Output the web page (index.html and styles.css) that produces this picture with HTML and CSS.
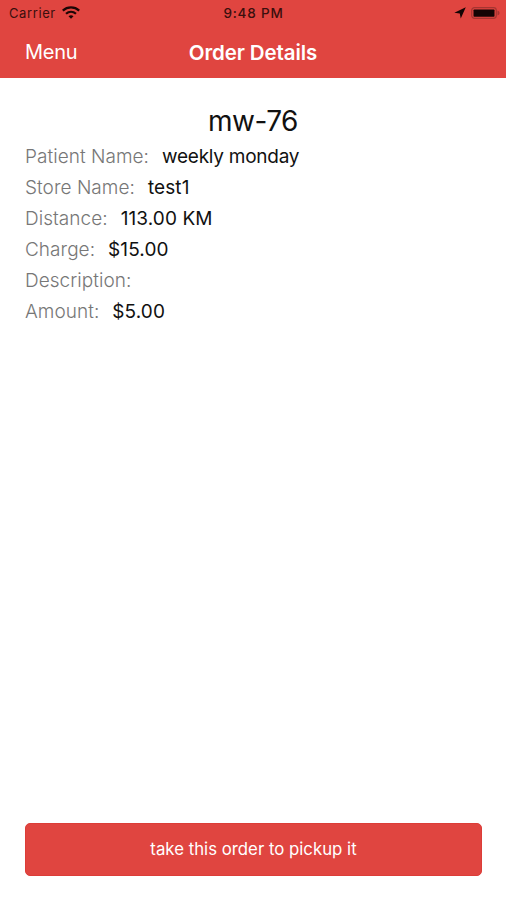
FILE: index.html
```html
<!DOCTYPE html>
<html lang="en">
<head>
  <meta charset="UTF-8" />
  <meta name="viewport" content="width=device-width, initial-scale=1" />
  <title>Order Details</title>
  <link rel="stylesheet" href="styles.css">
</head>
<body>
  <header class="header">
    <div class="status-bar">
      <div class="status-left">
        <span class="carrier">Carrier</span>
        <svg class="wifi" viewBox="0 0 18 13" width="18" height="13" fill="none" stroke="#1c0605">
          <path d="M.8 4.600C5.500 .4 12.500 .4 17.200 4.600" stroke-width="2.300" />
          <path d="M4 7.800C6.900 5.200 11.100 5.200 14 7.800" stroke-width="2.200" />
          <path d="M6.500 10.300Q9 8.200 11.500 10.300L9 12.800Z" fill="#1c0605" stroke="none" />
        </svg>
      </div>
      <span class="time">9:48 PM</span>
      <div class="status-right">
        <svg width="12" height="12" viewBox="0 0 11 11">
          <path d="M10.800 .3L6.200 10.500L5.300 6L.3 5.200Z" fill="#140404" />
        </svg>
        <svg width="29" height="12" viewBox="0 0 29 12">
          <rect x=".7" y=".7" width="24.600" height="10.600" rx="2.800" fill="none" stroke="#a53531" stroke-width="1.200" />
          <rect x="2.500" y="2.400" width="21" height="7.400" rx=".8" fill="#140404" />
          <path d="M26.500 3.600Q28.600 4.300 28.600 6T26.500 8.400Z" fill="#a53531" />
        </svg>
      </div>
    </div>
    <nav class="nav">
      <a class="menu">Menu</a>
      <h1>Order Details</h1>
    </nav>
  </header>

  <main class="content">
    <h2>mw-76</h2>
    <div class="row"><span class="label">Patient Name:</span><span class="value name">weekly monday</span></div>
    <div class="row"><span class="label">Store Name:</span><span class="value">test1</span></div>
    <div class="row"><span class="label">Distance:</span><span class="value">113.00 KM</span></div>
    <div class="row"><span class="label">Charge:</span><span class="value">$15.00</span></div>
    <div class="row"><span class="label">Description:</span></div>
    <div class="row"><span class="label">Amount:</span><span class="value">$5.00</span></div>
  </main>

  <button class="pickup">take this order to pickup it</button>
</body>
</html>
```
FILE: styles.css
```css
* {
  box-sizing: border-box;
}

body {
  margin: 0;
  height: 100vh;
  display: flex;
  flex-direction: column;
  background: #fff;
  color: #111;
  font-family: Inter, "Liberation Sans", sans-serif;
}

.header {
  height: 78px;
  background: #e04540;
}

.status-bar {
  display: grid;
  grid-template-columns: 1fr auto 1fr;
  align-items: center;
  height: 26px;
  padding: 0 6px 0 9px;
  color: #3a0f0d;
  font-size: 13px;
}

.status-left,
.status-right {
  display: flex;
  align-items: center;
}

.status-left {
  gap: 6px;
}

.carrier {
  letter-spacing: 0.6px;
}

.wifi {
  margin-bottom: 1px;
}

.time {
  margin-right: 2px;
  font-size: 13.5px;
  font-weight: 500;
  letter-spacing: 0.8px;
}

.status-right {
  justify-content: flex-end;
  gap: 5px;
}

.nav {
  display: grid;
  grid-template-columns: 1fr auto 1fr;
  align-items: center;
  height: 52px;
  padding: 0 25px;
  color: #fff;
}

.menu {
  font-size: 20px;
  letter-spacing: -0.3px;
}

.nav h1 {
  margin: 0;
  font-size: 20.5px;
  font-weight: 600;
  letter-spacing: -0.1px;
}

.content {
  flex: 1;
  padding: 26px 25px 0;
}

.content h2 {
  margin: 0;
  height: 37px;
  line-height: 34px;
  font-size: 28px;
  font-weight: 400;
  letter-spacing: -0.5px;
  text-align: center;
}

.row {
  display: flex;
  gap: 13px;
  height: 31px;
  line-height: 31px;
  font-size: 19px;
}

.label {
  color: #777;
  font-weight: 300;
  letter-spacing: 0.04px;
}

.value {
  letter-spacing: 0.1px;
}

.value.name {
  letter-spacing: -0.25px;
}

.pickup {
  height: 53px;
  margin: 0 24px 24px 25px;
  padding: 0 0 2px;
  border: 1px solid #dc3d38;
  border-radius: 5px;
  background: #e04540;
  color: #fff;
  font-family: inherit;
  font-size: 16.8px;
}
```
